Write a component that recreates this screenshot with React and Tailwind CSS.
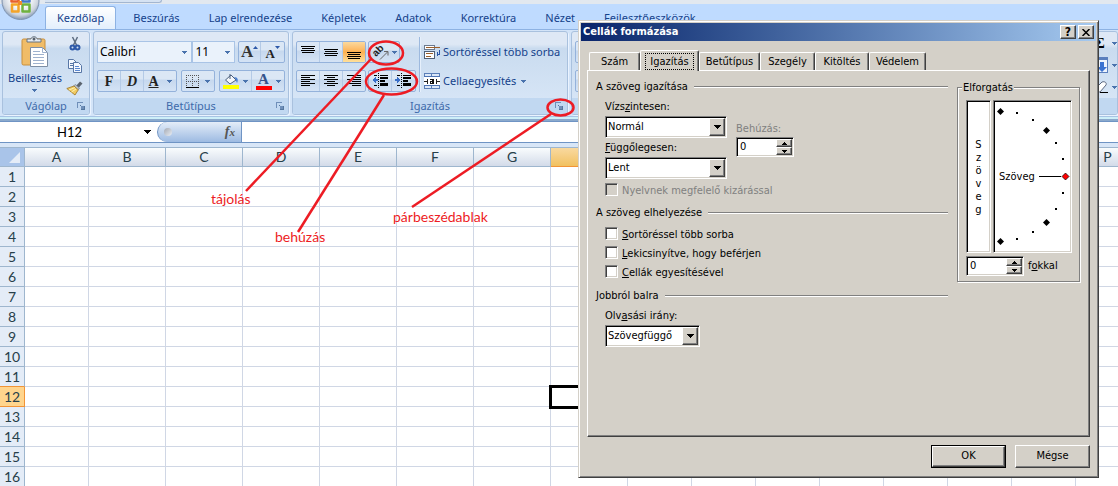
import React from 'react';

const SHEET_COLUMNS = [
  ['A', 64], ['B', 77], ['C', 77], ['D', 77], ['E', 77], ['F', 77], ['G', 77], ['H', 77],
  ['I', 64], ['J', 64], ['K', 64], ['L', 64], ['M', 64], ['N', 64], ['O', 64], ['P', 64],
];
const SHEET_ROWS = Array.from({ length: 16 }, (_, i) => i + 1);
const RIBBON_TABS = ['Kezdőlap', 'Beszúrás', 'Lap elrendezése', 'Képletek', 'Adatok', 'Korrektúra', 'Nézet', 'Fejlesztőeszközök'];

const raised = 'bg-[#d4d0c8] border border-t-white border-l-white border-r-[#404040] border-b-[#404040] shadow-[inset_-1px_-1px_0_#808080]';
const sunken = 'bg-white border border-t-[#808080] border-l-[#808080] border-r-white border-b-white shadow-[inset_1px_1px_0_#000,inset_-1px_-1px_0_#d4d0c8]';

function Caret({ className = 'text-[#4a73ad]' }) {
  return (
    <svg className={`shrink-0 ${className}`} width="5" height="3" viewBox="0 0 5 3" fill="currentColor" aria-hidden="true">
      <path d="M0 0h5v1H4v1H3v1H2V2H1V1H0z" />
    </svg>
  );
}

function BigCaret() {
  return (
    <svg className="shrink-0" width="7" height="4" viewBox="0 0 7 4" aria-hidden="true">
      <path d="M0 0h7v1H6v1H5v1H4v1H3V3H2V2H1V1H0z" fill="#000" />
    </svg>
  );
}

function Lines({ rows }) {
  return (
    <svg width="15" height="16" viewBox="0 0 15 16" aria-hidden="true" shapeRendering="crispEdges">
      {rows.map(([x, w, y]) => <rect key={y} x={x} y={y} width={w} height={1} fill="#000" />)}
    </svg>
  );
}

const vertical = {
  Felülre: [[0, 14, 2], [1, 12, 4], [0, 14, 6], [1, 12, 8]],
  Középre: [[0, 14, 5], [1, 12, 7], [0, 14, 9], [1, 12, 11]],
  Alulra: [[0, 14, 8], [1, 12, 10], [0, 14, 12], [1, 12, 14]],
};
const horizontal = {
  Balra: [[0, 14, 2], [0, 9, 4], [0, 14, 6], [0, 9, 8], [0, 14, 10], [0, 9, 12]],
  'Vízszintesen középre': [[0, 14, 2], [3, 8, 4], [0, 14, 6], [3, 8, 8], [0, 14, 10], [3, 8, 12]],
  Jobbra: [[0, 14, 2], [5, 9, 4], [0, 14, 6], [5, 9, 8], [0, 14, 10], [5, 9, 12]],
};

function IndentIcon({ right }) {
  return (
    <svg width="17" height="16" viewBox="0 0 17 16" aria-hidden="true" shapeRendering="crispEdges">
      <path d="M2 2.500h3M8 2.500h8M2 12.500h3M8 12.500h8" stroke="#000" />
      <path d="M8 5h8M8 8h5M8 10.500h8" stroke="#000" strokeWidth="2" />
      <path d="M6.500 0v16" stroke="#000" strokeDasharray="1 1" />
      <path d={right ? 'M0 6h2V4l4 3-4 3V8H0z' : 'M6 6H4V4L0 7l4 3V8h2z'} fill="#3a6fc9" />
    </svg>
  );
}

function Group({ title, launcher, className = '', children }) {
  return (
    <section className={`flex flex-col overflow-hidden rounded-[3px] border border-[#a9c1de] bg-linear-to-b from-[#dee8f5] from-15% via-[#c9dbef] via-20% to-[#dae8f8] shadow-[1px_1px_0_#eaf3ff] ${className}`}>
      <div className="min-h-0 flex-1">{children}</div>
      <div className="flex h-4 shrink-0 items-center bg-[#c1d8f1] pr-1">
        <span className="flex-1 pl-3 text-center leading-4 text-[#3e6aaa]">{title}</span>
        {launcher && (
          <button aria-label={`${title} párbeszédablak`} className="h-3 w-2">
            <svg width="8" height="8" viewBox="0 0 8 8" shapeRendering="crispEdges" aria-hidden="true">
              <path d="M0.500 6V0.500H6" fill="none" stroke="#6f8fb9" />
              <path d="M3.500 7.500h4v-4M3 3l3 3" fill="none" stroke="#55779f" />
              <rect x="4" y="4" width="3" height="3" fill="#6f8fb9" />
            </svg>
          </button>
        )}
      </div>
    </section>
  );
}

function Bar({ className = '', children }) {
  return (
    <div className={`flex h-[22px] items-stretch overflow-hidden rounded-[2px] border border-[#94b2db] bg-linear-to-b from-[#dbe7f5] from-40% via-[#c6d8ee] via-45% to-[#d4e3f5] ${className}`}>
      {children}
    </div>
  );
}

function Tool({ label, className = 'w-[23px]', children }) {
  return (
    <button aria-label={label} className={`flex items-center justify-center border-r border-[#b4cae6] last:border-r-0 ${className}`}>
      {children}
    </button>
  );
}

function OfficeLogo() {
  return (
    <svg className="shrink-0" width="42" height="24" viewBox="0 0 42 24" aria-hidden="true">
      <defs>
        <radialGradient id="orb" cx="0.5" cy="0.4" r="0.6">
          <stop offset="0.4" stopColor="#fff" />
          <stop offset="0.8" stopColor="#cdd4de" />
          <stop offset="1" stopColor="#8296b1" />
        </radialGradient>
      </defs>
      <circle cx="20.500" cy="1" r="18.500" fill="url(#orb)" stroke="#7f93b0" />
      <g fill="none" strokeWidth="2.500" strokeLinejoin="round">
        <path d="M11.500-5.500h7v7h-7z" stroke="#e8602c" />
        <path d="M22.500-5.500h7v7h-7z" stroke="#4279c9" />
        <path d="M12 4.500h6.500v7H12z" stroke="#f4a428" />
        <path d="M22.500 4.500h7v7h-7z" stroke="#6fb23e" />
      </g>
      <path d="M18 1h4v4h-4z" fill="#f08a2b" />
    </svg>
  );
}

function Clipboard() {
  return (
    <svg width="28" height="32" viewBox="0 0 28 32" aria-hidden="true">
      <rect x="1" y="3" width="23" height="26" rx="1.500" fill="#f0bc68" stroke="#c88f3c" />
      <path d="M6 6V3h4c0-3 6-3 6 0h4v3z" fill="#e8edf3" stroke="#66727f" />
      <circle cx="13" cy="3" r="1.500" fill="#56616d" />
      <path d="M9.500 11.500h12l5 5v14h-17z" fill="#fff" stroke="#7d8ea5" />
      <path d="M21.500 11.500v5h5M12 15.500h7M12 18.500h11M12 21.500h11M12 24.500h11M12 27.500h11" fill="none" stroke="#9fb2ce" />
    </svg>
  );
}

function Scissors() {
  return (
    <svg width="14" height="15" viewBox="0 0 14 15" fill="none" aria-hidden="true">
      <path d="M4.500 1l4 8M9.500 1l-4 8" stroke="#5d6c80" strokeWidth="1.500" />
      <circle cx="4.500" cy="11.500" r="2" stroke="#2c58a8" strokeWidth="2" />
      <circle cx="9.500" cy="11.500" r="2" stroke="#2c58a8" strokeWidth="2" />
    </svg>
  );
}

function CopyIcon() {
  return (
    <svg width="16" height="14" viewBox="0 0 16 14" fill="#f4f8ff" stroke="#5877a6" aria-hidden="true">
      <path d="M1.500.5h5l3 3v6h-8z" />
      <path d="M3 4.500h3M3 6.500h3" />
      <path d="M6.500 3.500h5l3 3v7h-8z" />
      <path d="M8 7.500h4M8 9.500h5M8 11.500h5" stroke="#5b88d0" />
    </svg>
  );
}

function Brush() {
  return (
    <svg width="17" height="15" viewBox="0 0 17 15" aria-hidden="true">
      <path d="M10 5l4-4.500 2.500 2L12.500 7z" fill="#5b646f" />
      <path d="M7.500 5l2-1.500 4 3.500-1.500 2z" fill="#b9c1ca" stroke="#66717e" strokeWidth=".6" />
      <path d="M.8 7.500L8 5l4.300 3.800L9 14z" fill="#f1cb62" stroke="#9c7423" strokeWidth=".8" />
      <path d="M3 9l6-2.500M5.500 11l4.500-3" stroke="#fff1b0" />
    </svg>
  );
}

function RibbonSelect({ label, value, className }) {
  return (
    <div className={`grid h-[22px] items-center border border-[#a9c4e6] bg-[#eaf2fb] text-[12px] ${className}`}>
      <select aria-label={label} className="col-start-1 row-start-1 h-full min-w-0 appearance-none pl-0.5 text-black">
        <option>{value}</option>
      </select>
      <Caret className="pointer-events-none col-start-1 row-start-1 mr-1 justify-self-end text-[#4a73ad]" />
    </div>
  );
}

function Ribbon() {
  return (
    <div className="flex h-[88px] gap-[3px] border-y border-t-[#8db2e3] border-b-[#a8c4e4] bg-[#d3e4f8] py-px pl-0.5 text-[11px]">
      <Group title="Vágólap" launcher className="w-[88px] shrink-0">
        <div className="flex h-full justify-between pr-1.5 pl-[5px]">
          <button className="flex flex-col items-center pt-1 text-[#15428b]">
            <Clipboard />
            <span className="mt-0.5 leading-4">Beillesztés</span>
            <span className="flex h-2 items-center"><Caret /></span>
          </button>
          <div className="flex flex-col items-center gap-2 pt-1">
            <button aria-label="Kivágás"><Scissors /></button>
            <button aria-label="Másolás"><CopyIcon /></button>
            <button aria-label="Formátummásoló"><Brush /></button>
          </div>
        </div>
      </Group>

      <Group title="Betűtípus" launcher className="w-[196px] shrink-0">
        <div className="flex flex-col gap-[7px] px-[3px] pt-[9px]">
          <div className="flex items-center">
            <RibbonSelect label="Betűtípus neve" value="Calibri" className="w-[97px]" />
            <RibbonSelect label="Betűméret" value="11" className="w-[43px]" />
            <Bar className="ml-[3px]">
              <Tool label="Betűméret növelése">
                <span className="font-['Liberation_Serif',serif] text-[17px] font-bold text-[#333]">A</span>
                <svg width="5" height="3" className="mt-1 self-start" aria-hidden="true"><path d="M0 3L2.500 0 5 3z" fill="#2c58a8" /></svg>
              </Tool>
              <Tool label="Betűméret csökkentése">
                <span className="pt-1 font-['Liberation_Serif',serif] text-[13px] font-bold text-[#222]">A</span>
                <svg width="5" height="3" className="mt-1 self-start" aria-hidden="true"><path d="M0 0h5L2.500 3z" fill="#2c58a8" /></svg>
              </Tool>
            </Bar>
          </div>
          <div className="flex gap-1 font-['Liberation_Serif',serif] text-[14px] font-bold text-[#222]">
            <Bar>
              <Tool label="Félkövér">F</Tool>
              <Tool label="Dőlt"><i>D</i></Tool>
              <Tool label="Aláhúzott" className="w-8 gap-2"><span className="underline">A</span><Caret /></Tool>
            </Bar>
            <Bar>
              <Tool label="Szegélyek" className="w-8 gap-1.5">
                <svg width="13" height="13" viewBox="0 0 13 13" aria-hidden="true" shapeRendering="crispEdges">
                  <path d="M0 .5h13M0 6.500h13M.5 0v12M6.500 0v12M12.500 0v12" stroke="#555" strokeDasharray="1 1" />
                  <path d="M0 12.500h13" stroke="#000" />
                </svg>
                <Caret />
              </Tool>
            </Bar>
            <Bar>
              <Tool label="Kitöltőszín" className="w-8 gap-1">
                <svg width="16" height="16" viewBox="0 0 16 16" aria-hidden="true">
                  <path d="M7 1v5M2.500 7L8 2l5 5-6 4z" fill="#f4f7fb" stroke="#4b5f7c" />
                  <path d="M11 4c4 0 4.500 3 3 6-1-2-1-4-3-6z" fill="#4a7fd0" />
                  <path d="M0 12h16v4H0z" fill="#ff0" />
                </svg>
                <Caret />
              </Tool>
              <Tool label="Betűszín" className="w-8 gap-1">
                <span className="h-[18px] w-4 border-b-4 border-[#f00] text-center text-[15px] leading-[15px] text-[#34548c]">A</span>
                <Caret />
              </Tool>
            </Bar>
          </div>
        </div>
      </Group>

      <Group title="Igazítás" launcher className="w-[276px] shrink-0">
        <div className="flex h-full gap-[3px] pt-[9px] pl-[3px]">
          <div className="flex flex-col gap-[7px]">
            <div className="flex gap-0.5">
              <Bar>
                {Object.entries(vertical).map(([name, rows]) => (
                  <Tool key={name} label={name} className={name === 'Alulra' ? 'w-[22px] bg-linear-to-b from-[#fbd99d] via-[#fdb04f] to-[#fee09a]' : 'w-[23px]'}>
                    <Lines rows={rows} />
                  </Tool>
                ))}
              </Bar>
              <Bar>
                <Tool label="Tájolás" className="w-[30px] gap-0.5">
                  <svg width="19" height="18" viewBox="0 0 19 18" aria-hidden="true">
                    <text x="5" y="14" transform="rotate(-45 5 14)" fontFamily="Liberation Sans, sans-serif" fontSize="10" fontWeight="700" fill="#222">ab</text>
                    <path d="M9 16.500l7.500-7.500M13 8.500h4v4" fill="none" stroke="#666" />
                  </svg>
                  <Caret />
                </Tool>
              </Bar>
            </div>
            <div className="flex gap-0.5">
              <Bar>
                {Object.entries(horizontal).map(([name, rows]) => (
                  <Tool key={name} label={name} className={name === 'Jobbra' ? 'w-[22px]' : 'w-[23px]'}><Lines rows={rows} /></Tool>
                ))}
              </Bar>
              <Bar>
                <Tool label="Behúzás csökkentése"><IndentIcon /></Tool>
                <Tool label="Behúzás növelése"><IndentIcon right /></Tool>
              </Bar>
            </div>
          </div>
          <div className="-mt-1 mb-1.5 w-px bg-[#9db9de] shadow-[1px_0_0_#e6f0fc]" />
          <div className="flex flex-col gap-[7px] pl-px text-[#15428b]">
            <button className="flex h-[22px] items-center gap-[3px] whitespace-nowrap">
              <svg width="16" height="16" viewBox="0 0 16 16" aria-hidden="true" shapeRendering="crispEdges">
                <rect x=".5" y="1.500" width="10" height="4" fill="#fff" stroke="#6b7a90" />
                <path d="M2 3.500h14" stroke="#9b5f2c" />
                <rect x=".5" y="7.500" width="10" height="7" fill="#fff" stroke="#4f5f78" />
                <path d="M2 9.500h7M2 12.500h5" stroke="#9b5f2c" />
                <path d="M15.500 6v4h-3M13 8v4" fill="none" stroke="#2c58a8" />
              </svg>
              Sortöréssel több sorba
            </button>
            <button className="flex h-[22px] items-center gap-[3px] whitespace-nowrap">
              <svg width="16" height="16" viewBox="0 0 16 16" aria-hidden="true" shapeRendering="crispEdges">
                <rect x=".5" y=".5" width="15" height="15" fill="#dbe7f7" stroke="#5b7fb8" />
                <path d="M7.500 0v4M7.500 12v4" stroke="#5b7fb8" />
                <rect x="0" y="4" width="16" height="8" fill="#fff" />
                <path d="M0 3.500h16M0 12.500h16" stroke="#4d74b5" />
                <path d="M0 8.500h4M3.500 6v5M12 8.500h4M12.500 6v5" stroke="#222" />
                <path d="M6 6h4v5H6V8h2V7H6zM7 9v1h1V9z" fill="#111" fillRule="evenodd" />
              </svg>
              Cellaegyesítés
              <Caret className="ml-0.5 text-[#4a73ad]" />
            </button>
          </div>
        </div>
      </Group>

      <Group title="" className="min-w-0 flex-1">
        <div className="flex h-full justify-between pl-[3px]">
          <div className="flex flex-col gap-[7px] pt-[9px]">
            <Bar className="w-20">{null}</Bar>
            <Bar className="w-20">{null}</Bar>
          </div>
          <div className="flex flex-col gap-2 pt-1">
            <button aria-label="AutoSzum" className="flex h-3.5 items-center gap-1">
              <span className="w-4 text-center font-['Liberation_Serif',serif] text-[15px] leading-3.5 font-bold">Σ</span><Caret />
            </button>
            <button aria-label="Kitöltés" className="flex h-3.5 items-center gap-1">
              <svg width="16" height="16" viewBox="0 0 16 16" aria-hidden="true">
                <rect x=".5" y=".5" width="15" height="15" fill="#eef4fd" stroke="#5a7fbd" />
                <path d="M0 1.500h16" stroke="#5a7fbd" strokeWidth="3" />
                <path d="M8 5h4v5h3l-5 5-5-5h3z" fill="#3b73d1" />
              </svg><Caret />
            </button>
            <button aria-label="Törlés" className="flex h-3.5 items-center gap-1">
              <svg width="16" height="14" viewBox="0 0 16 14" aria-hidden="true">
                <path d="M3 9l7-7c3-1 5 1 4 3l-6 7H4z" fill="#fff" stroke="#5c6880" />
                <path d="M8 12.500h8" stroke="#000" />
              </svg><Caret />
            </button>
          </div>
        </div>
      </Group>
    </div>
  );
}

function FormulaBar() {
  return (
    <div className="flex h-[22px] border-y border-[#6f94c4] bg-white text-black">
      <div className="flex w-[157px] items-center justify-between pr-1.5">
        <input aria-label="Név mező" defaultValue="H12" className="w-[139px] min-w-0 bg-transparent text-center font-[Lato,sans-serif] text-[13px] leading-4" />
        <BigCaret />
      </div>
      <div className="flex w-[85px] items-center justify-between rounded-l-full border-r border-l border-[#6f94c4] bg-linear-to-b from-[#e4edf8] to-[#9dbbe2] pr-1.5 pl-1.5">
        <span className="size-2 rounded-full bg-linear-to-br from-[#a5aab3] to-[#e9eef5]" />
        <button aria-label="Függvény beszúrása" className="font-['Liberation_Serif',serif] text-[14px] leading-5 font-bold text-[#555] italic">f<span className="text-[11px]">x</span></button>
      </div>
      <input aria-label="Szerkesztőléc" className="min-w-0 flex-1 bg-white" />
    </div>
  );
}

function Sheet() {
  return (
    <table className="w-[1140px] table-fixed border-separate border-spacing-0 bg-white font-[Lato,sans-serif] text-[14px] text-[#273f4a]">
      <colgroup>
        <col className="w-[25px]" />
        {SHEET_COLUMNS.map(([name, width]) => <col key={name} style={{ width }} />)}
      </colgroup>
      <thead>
        <tr className="h-5">
          <th aria-label="Az összes kijelölése" className="border-t border-r border-b border-[#9eb6ce] bg-[#a9c4e9] p-0">
            <svg className="mr-1 ml-auto" width="11" height="11" viewBox="0 0 11 11" aria-hidden="true"><path d="M11 0v11H0z" fill="#e4ecf7" /></svg>
          </th>
          {SHEET_COLUMNS.map(([name]) => (
            <th key={name} className={`border-t border-r border-b p-0 leading-4 font-normal ${name === 'H' ? 'border-[#f29436] border-t-[#9eb6ce] bg-linear-to-b from-[#f9d99f] to-[#f1c15f]' : 'border-[#9eb6ce] bg-linear-to-b from-[#f9fcfd] to-[#d3dbe9]'}`}>{name}</th>
          ))}
        </tr>
      </thead>
      <tbody>
        {SHEET_ROWS.map((row) => (
          <tr key={row} className="h-5">
            <th className={`border-r border-b p-0 leading-4 font-normal ${row === 12 ? 'border-[#f29436] bg-[#ffd58d]' : row === 11 ? 'border-[#9eb6ce] border-b-[#f29436] bg-[#e4ecf7]' : 'border-[#9eb6ce] bg-[#e4ecf7]'}`}>{row}</th>
            {SHEET_COLUMNS.map(([name]) => (
              <td key={name} className={`border-r border-b border-[#d0d7e5] p-0 ${row === 12 && name === 'H' ? 'outline-3 -outline-offset-1 outline-black' : ''}`} />
            ))}
          </tr>
        ))}
      </tbody>
    </table>
  );
}

const NOTES = [
  { text: 'tájolás', place: 'left-[211px] top-[189px]' },
  { text: 'behúzás', place: 'left-[275px] top-[227px]' },
  { text: 'párbeszédablak', place: 'left-[393px] top-[207px]' },
];

function Annotations() {
  return (
    <div className="pointer-events-none absolute inset-0">
      <svg className="absolute top-0 left-0" width="600" height="260" viewBox="0 0 600 260" fill="none" stroke="#ed1c24" strokeWidth="2.500" aria-hidden="true">
        <ellipse cx="386" cy="53" rx="17" ry="11.500" />
        <path d="M371 59L246 191" />
        <ellipse cx="391.500" cy="81.500" rx="25.500" ry="13" />
        <path d="M384 95L298 232" />
        <ellipse cx="560.500" cy="107.500" rx="13" ry="8" />
        <path d="M551 114L412 207" />
      </svg>
      {NOTES.map(({ text, place }) => (
        <span key={text} className={`absolute font-[Lato,sans-serif] text-[14px] leading-5 text-[#ed1c24] ${place}`}>{text}</span>
      ))}
    </div>
  );
}

function Combo({ id, value, className }) {
  return (
    <div className={`grid h-[22px] ${sunken} ${className}`}>
      <select id={id} className="col-start-1 row-start-1 h-full min-w-0 appearance-none pl-0.5">
        <option>{value}</option>
      </select>
      <span className={`pointer-events-none col-start-1 row-start-1 m-px flex w-4 items-center justify-center justify-self-end ${raised}`}><BigCaret /></span>
    </div>
  );
}

function Spin({ id }) {
  return (
    <div className={`flex h-5 w-[58px] p-px ${sunken}`}>
      <input id={id} defaultValue="0" className="min-w-0 flex-1 pt-px pl-0.5" />
      <div className="flex w-4 flex-col">
        <button aria-label="Növelés" className={`flex flex-1 items-center justify-center ${raised}`}>
          <svg width="5" height="3" viewBox="0 0 5 3" aria-hidden="true"><path d="M2 0h1v1h1v1h1v1H0V2h1V1h1z" /></svg>
        </button>
        <button aria-label="Csökkentés" className={`flex flex-1 items-center justify-center ${raised}`}><Caret className="text-black" /></button>
      </div>
    </div>
  );
}

function Section({ title }) {
  return (
    <div className="flex h-4 items-center gap-1.5">
      <h2 className="whitespace-nowrap">{title}</h2>
      <div className="h-0.5 flex-1 border-t border-b border-t-[#808080] border-b-white" />
    </div>
  );
}

function Check({ disabled, children }) {
  return (
    <label className={`flex h-[19px] items-start gap-1 ${disabled ? 'text-[#808080]' : ''}`}>
      <input type="checkbox" disabled={disabled} className={`mt-0.5 size-[13px] shrink-0 appearance-none border border-t-[#808080] border-l-[#808080] border-r-white border-b-white shadow-[inset_1px_1px_0_#404040,inset_-1px_-1px_0_#d4d0c8] ${disabled ? 'bg-[#d4d0c8]' : 'bg-white'}`} />
      <span className="leading-[19px]">{children}</span>
    </label>
  );
}

const DIAL_MARKS = [[5, 9], [51, 28], [51, 120], [5, 139]];
const DIAL_DOTS = [[21, 10], [37, 17], [60, 40], [67, 56], [67, 90], [60, 106], [37, 129], [21, 136]];

function Rotation() {
  return (
    <fieldset className="relative h-[195px] w-[123px] border border-[#808080] pt-3 pl-2 shadow-[1px_1px_0_#fff,inset_1px_1px_0_#fff]">
      <legend className="absolute -top-2 left-1 bg-[#d4d0c8] px-px leading-4">Elforgatás</legend>
      <div className="flex h-[153px] gap-0.5">
        <button className={`flex w-[25px] flex-col items-center justify-center ${sunken}`}>
          {[...'Szöveg'].map((letter, i) => <span key={i} className="leading-[13px]">{letter}</span>)}
        </button>
        <div className={`relative w-[79px] ${sunken}`}>
          <svg className="block" width="77" height="151" viewBox="-1 -1 77 151" aria-hidden="true">
            {DIAL_MARKS.map(([x, y]) => <path key={`${x}-${y}`} d={`M${x - 3} ${y + 0.5}l3.500-3.500 3.500 3.500-3.500 3.500z`} />)}
            {DIAL_DOTS.map(([x, y]) => <rect key={`${x}-${y}`} x={x} y={y} width="2" height="2" />)}
            <path d="M44 74h22v1H44z" />
            <path d="M67 74.500l3.500-3.500 3.500 3.500-3.500 3.500z" fill="#f00" stroke="#000" strokeWidth=".7" />
          </svg>
          <span className="absolute top-[68px] left-[5px] leading-4">Szöveg</span>
        </div>
      </div>
      <div className="mt-[3px] flex items-center gap-1">
        <Spin id="degrees" />
        <label htmlFor="degrees">f<u>o</u>kkal</label>
      </div>
    </fieldset>
  );
}

const DIALOG_TABS = [
  ['Szám', 'w-[51px]'], ['Igazítás', 'w-[59px]'], ['Betűtípus', 'w-[61px]'], ['Szegély', 'w-[55px]'], ['Kitöltés', 'w-[54px]'], ['Védelem', 'w-[57px]'],
];

function Dialog() {
  return (
    <div role="dialog" aria-label="Cellák formázása" className="absolute top-5 left-[578px] w-[521px] border border-t-[#d4d0c8] border-l-[#d4d0c8] border-r-[#404040] border-b-[#404040] bg-[#d4d0c8] p-0.5 font-['DejaVu_Sans_Condensed','DejaVu_Sans',sans-serif] text-[11px] text-black shadow-[inset_1px_1px_0_#fff,inset_-1px_-1px_0_#808080]">
      <div className="flex h-[18px] items-center gap-0.5 bg-linear-to-r from-[#0a246a] to-[#a6caf0] px-0.5">
        <h1 className="flex-1 text-[11px] font-bold text-white">Cellák formázása</h1>
        <button aria-label="Súgó" className={`flex h-3.5 w-4 items-center justify-center text-[12px] font-bold ${raised}`}>?</button>
        <button aria-label="Bezárás" className={`flex h-3.5 w-4 items-center justify-center ${raised}`}>
          <svg width="8" height="7" viewBox="0 0 8 7" aria-hidden="true"><path d="M.5 0l7 7M7.500 0l-7 7" stroke="#000" strokeWidth="1.500" /></svg>
        </button>
      </div>
      <div className="px-1.5 pt-[9px] pb-[7px]">
        <div role="tablist" className="flex h-5 items-end pl-0.5">
          {DIALOG_TABS.map(([name, width]) => {
            const active = name === 'Igazítás';
            return (
              <button key={name} role="tab" aria-selected={active} className={`flex shrink-0 items-center justify-center rounded-t-[2px] border border-b-0 border-t-white border-l-white border-r-[#404040] bg-[#d4d0c8] shadow-[inset_-1px_0_0_#808080] ${width} ${active ? 'relative -mb-px h-[21px]' : 'h-[18px]'}`}>
                <span className={active ? 'border border-dotted border-black px-1 leading-[15px]' : 'leading-4'}>{name}</span>
              </button>
            );
          })}
        </div>
        <div className="flex h-[367px] items-start justify-between border border-t-white border-l-white border-r-[#404040] border-b-[#404040] pt-2 pr-[9px] pl-2 shadow-[inset_-1px_-1px_0_#808080]">
          <div className="w-[352px]">
            <Section title="A szöveg igazítása" />
            <div className="flex items-start gap-[9px] pt-1 pl-[9px]">
              <div>
                <label htmlFor="horizontal" className="block leading-4">Vízs<u>z</u>intesen:</label>
                <Combo id="horizontal" value="Normál" className="mt-px w-[122px]" />
                <label htmlFor="vertical" className="mt-0.5 block leading-4"><u>F</u>üggőlegesen:</label>
                <Combo id="vertical" value="Lent" className="mt-px w-[122px]" />
              </div>
              <div className="pt-[22px]">
                <label htmlFor="indent" className="block leading-4 text-[#808080]">Behúzás:</label>
                <Spin id="indent" />
              </div>
            </div>
            <div className="pt-0.5 pl-[9px]"><Check disabled>Nyelvnek megfelelő kizárással</Check></div>
            <div className="pt-[5px]"><Section title="A szöveg elhelyezése" /></div>
            <div className="pt-1 pl-[9px]">
              <Check><u>S</u>ortöréssel több sorba</Check>
              <Check><u>L</u>ekicsinyítve, hogy beférjen</Check>
              <Check><u>C</u>ellák egyesítésével</Check>
            </div>
            <div className="pt-1.5"><Section title="Jobbról balra" /></div>
            <div className="pt-1 pl-[9px]">
              <label htmlFor="direction" className="block leading-4">Olv<u>a</u>sási irány:</label>
              <Combo id="direction" value="Szövegfüggő" className="mt-px w-[95px]" />
            </div>
          </div>
          <div className="pt-2"><Rotation /></div>
        </div>
        <div className="flex justify-end gap-[9px] pt-2">
          <div className="border border-black"><button className={`h-[21px] w-[73px] ${raised}`}>OK</button></div>
          <button className={`h-[23px] w-[75px] ${raised}`}>Mégse</button>
        </div>
      </div>
    </div>
  );
}

export default function App() {
  return (
    <main className="relative h-screen overflow-hidden bg-[#bfdbff] font-['Noto_Sans','Open_Sans',sans-serif] text-[11px]">
      <header className="flex h-[29px] bg-linear-to-b from-[#e2e8ef] from-15% to-[#bfdbff] to-15%">
        <div className="-mr-px flex w-[46px] shrink-0 items-start"><OfficeLogo /></div>
        <div className="flex min-w-0 flex-1 flex-col justify-between">
          <div className="h-[3px] w-[117px] rounded-br-[4px] border-r border-b border-[#a3b6d0] bg-[#d5e2f2]" />
          <nav className="flex items-end gap-[5px]">
            {RIBBON_TABS.map((tab, i) => (
              <a key={tab} href="#" className={`h-[23px] rounded-t-[3px] border border-b-0 px-[11px] leading-[22px] whitespace-nowrap text-[#15428b] ${i === 0 ? 'border-[#8db2e3] bg-linear-to-b from-white to-[#e3effc]' : 'border-transparent'}`}>{tab}</a>
            ))}
          </nav>
        </div>
      </header>
      <Ribbon />
      <div className="h-1 bg-linear-to-b from-[#cdeff8] from-50% to-[#8ba9cc] to-50%" />
      <FormulaBar />
      <div className="h-1 bg-[#d8e6f7]" />
      <Sheet />
      <Annotations />
      <Dialog />
    </main>
  );
}
